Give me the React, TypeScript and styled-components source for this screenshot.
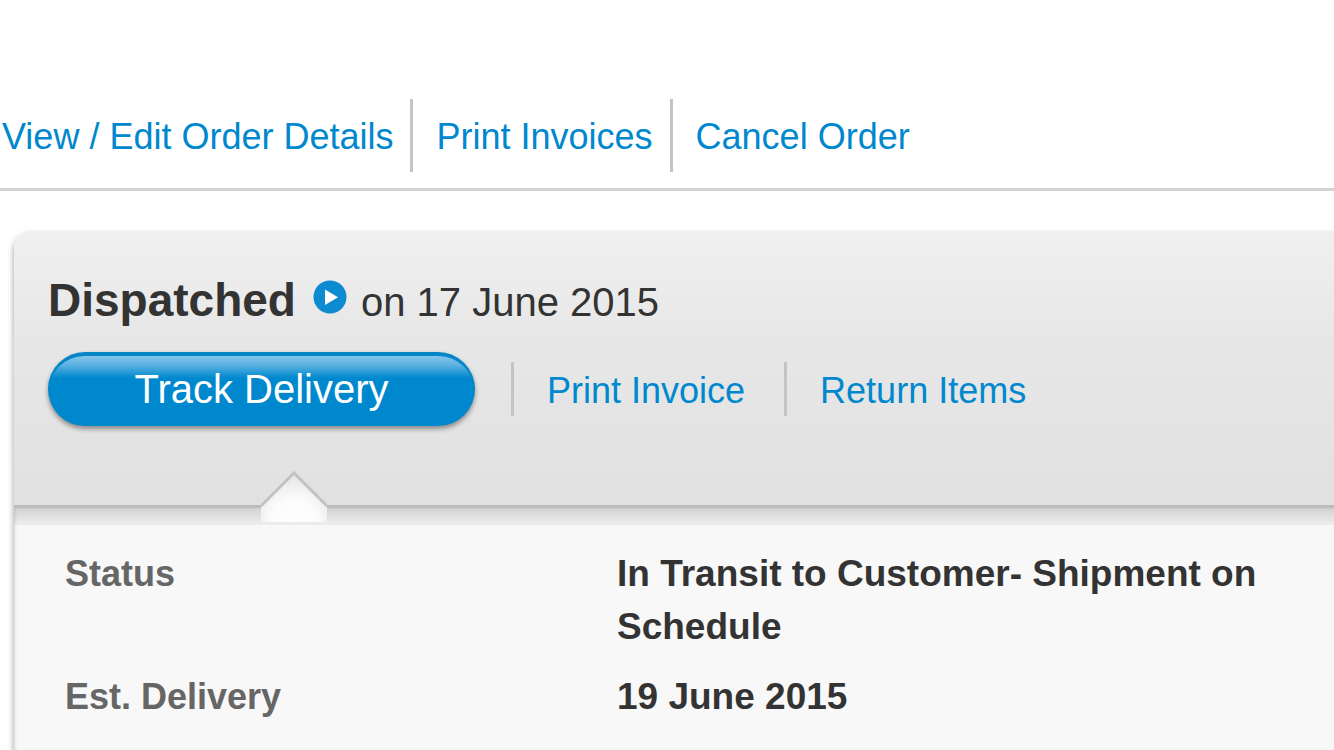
import React from "react";
import styled, { createGlobalStyle } from "styled-components";

const GlobalStyle = createGlobalStyle`
  *, *::before, *::after { box-sizing: border-box; }
  html { overflow: hidden; }
  body {
    margin: 0;
    background: #fff;
    color: #333;
    font-family: "Liberation Sans", Arial, sans-serif;
  }
`;

const Page = styled.div`
  min-height: 100vh;
  display: flex;
  flex-direction: column;
`;

const OrderNav = styled.nav`
  display: flex;
  align-items: center;
  padding: 99px 0 16px 2px;
  border-bottom: 3px solid #d4d4d4;
`;

const ActionLink = styled.a`
  color: #0088ce;
  font-size: 36px;
  line-height: 54px;
  text-decoration: none;
  white-space: nowrap;
`;

const NavItem = styled.div<{ $last?: boolean }>`
  display: flex;
  align-items: center;
  height: 73px;
  padding: 2px 17px 0 0;
  margin-right: 23px;
  border-right: ${(p) => (p.$last ? "0" : "3px solid #c4c4c4")};
`;

const Shipment = styled.section`
  flex: 1;
  display: flex;
  flex-direction: column;
  margin: 40px 0 0 14px;
  border-radius: 16px 0 0 0;
  background: #f8f8f8;
  box-shadow: 0 4px 6px rgba(0, 0, 0, 0.4);
  clip-path: inset(-3px 0 0 -14px);
`;

const ShipmentHeader = styled.header`
  height: 277px;
  padding: 41px 34px 0;
  border-radius: 16px 0 0 0;
  border-bottom: 3px solid #bcbcbc;
  background: linear-gradient(#f0f0f0, #e7e7e7 40%, #e1e1e1);
`;

const StatusLine = styled.div`
  display: flex;
  align-items: baseline;
  height: 56px;
  line-height: 56px;
  white-space: nowrap;
`;

const StatusTitle = styled.h2`
  margin: 0;
  font-size: 46px;
  line-height: 56px;
`;

const ExpandButton = styled.button`
  width: 34px;
  height: 34px;
  margin: 8px 14px 0 17px;
  padding: 0;
  border: 0;
  background: none;
  align-self: flex-start;
  line-height: 0;
  cursor: pointer;
`;

const DispatchDate = styled.span`
  font-size: 40px;
`;

const Actions = styled.div`
  display: flex;
  align-items: center;
  margin-top: 24px;
`;

const TrackButton = styled.button`
  width: 427px;
  height: 74px;
  padding: 0;
  border: 0;
  border-radius: 37px;
  color: #fff;
  font-family: inherit;
  font-size: 40px;
  line-height: 74px;
  cursor: pointer;
  background: linear-gradient(#8ac8ec, #59b1e0 45%, #0088ce) 0 3px / 100% 23px no-repeat #0088ce;
  box-shadow: inset 0 4px 0 #0686c6, 0 3px 5px rgba(0, 0, 0, 0.4);
`;

const ShipmentAction = styled.div<{ $first?: boolean }>`
  display: flex;
  align-items: center;
  height: 54px;
  margin-left: ${(p) => (p.$first ? "36px" : "39px")};
  padding: 3px 0 0 33px;
  border-left: 3px solid #c4c4c4;
`;

const Details = styled.div`
  position: relative;
  flex: 1;
  padding: 39px 51px 24px;
  background: linear-gradient(#d3d3d3, #eeeeee) 0 0 / 100% 17px no-repeat #f8f8f8;
  box-shadow: inset 2px 0 2px rgba(0, 0, 0, 0.08);
`;

const Notch = styled.svg`
  position: absolute;
  left: 247px;
  top: -37px;
`;

const DetailList = styled.dl`
  display: grid;
  grid-template-columns: 552px 1fr;
  row-gap: 17px;
  margin: 0;
  font-size: 37px;
  font-weight: bold;
  line-height: 53px;
`;

const Label = styled.dt`
  color: #666;
  font-size: 36px;
`;

const Value = styled.dd`
  margin: 0;
`;

export default function App() {
  return (
    <Page>
      <GlobalStyle />
      <OrderNav aria-label="Order">
        <NavItem><ActionLink href="#details">View / Edit Order Details</ActionLink></NavItem>
        <NavItem><ActionLink href="#invoices">Print Invoices</ActionLink></NavItem>
        <NavItem $last><ActionLink href="#cancel">Cancel Order</ActionLink></NavItem>
      </OrderNav>
      <Shipment>
        <ShipmentHeader>
          <StatusLine>
            <StatusTitle>Dispatched</StatusTitle>
            <ExpandButton aria-label="About dispatch">
              <svg width="34" height="34" viewBox="0 0 34 34" aria-hidden="true">
                <circle cx="17" cy="17" r="16.5" fill="#0c8bd0" />
                <path d="M12 9.5v15.5l13-7.8z" fill="#fff" />
              </svg>
            </ExpandButton>
            <DispatchDate>on 17 June 2015</DispatchDate>
          </StatusLine>
          <Actions>
            <TrackButton>Track Delivery</TrackButton>
            <ShipmentAction $first><ActionLink href="#invoice">Print Invoice</ActionLink></ShipmentAction>
            <ShipmentAction><ActionLink href="#return">Return Items</ActionLink></ShipmentAction>
          </Actions>
        </ShipmentHeader>
        <Details>
          <Notch width="66" height="51" viewBox="0 0 66 51" aria-hidden="true">
            <defs>
              <radialGradient id="notch" gradientUnits="userSpaceOnUse" cx="33" cy="51" r="48">
                <stop offset="0" stopColor="#fff" />
                <stop offset="0.5" stopColor="#fbfbfb" />
                <stop offset="1" stopColor="#e4e4e4" />
              </radialGradient>
            </defs>
            <path d="M0 34 33 1 66 34V51H0z" fill="url(#notch)" />
            <path d="M0 35 33 2 66 35" fill="none" stroke="#c2c2c2" strokeWidth="3" />
          </Notch>
          <DetailList>
            <Label>Status</Label>
            <Value>In Transit to Customer- Shipment on Schedule</Value>
            <Label>Est. Delivery</Label>
            <Value>19 June 2015</Value>
          </DetailList>
        </Details>
      </Shipment>
    </Page>
  );
}
